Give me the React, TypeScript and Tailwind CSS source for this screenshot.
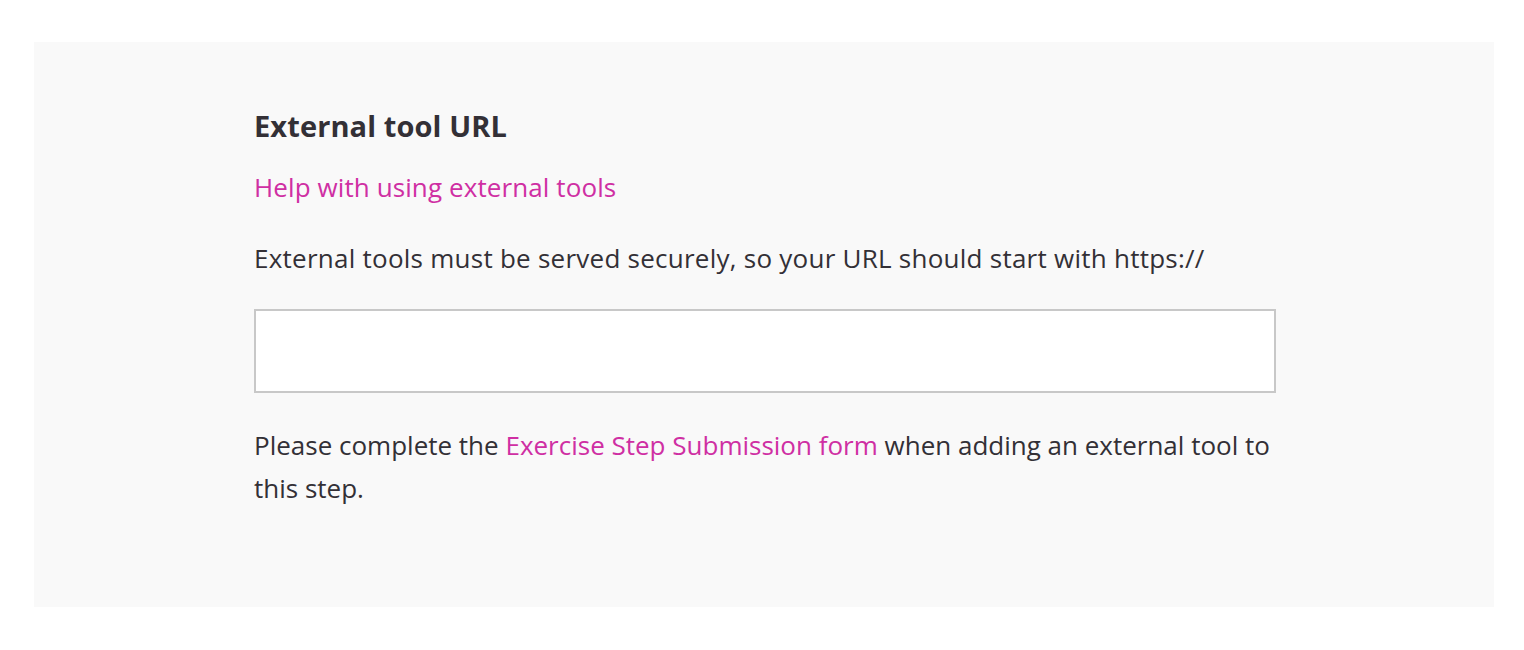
export default function App() {
    return (
        <div className="min-h-[650px] bg-white pt-[42px] pl-[34px]" style={{ fontFamily: "'Open Sans', Lato, sans-serif" }}>
            <section className="w-[1460px] h-[565px] bg-[#f9f9f9] pl-[220px] pt-[59px] text-[#333036]">
                <div className="w-[1022px] text-[26px] leading-[43px] tracking-[0.25px]">
                    <h2 className="text-[29px] leading-[50px] font-bold tracking-[0.1px]">External tool URL</h2>

                    <a href="#" className="mt-[15px] block text-[#cf2fa3] tracking-[0.1px]">
                        Help with using external tools
                    </a>

                    <p className="mt-[28px]">
                        External tools must be served securely, so your URL should start with https://
                    </p>

                    <input
                        type="text"
                        className="mt-[29px] block h-[84px] w-[1022px] border-2 border-[#c8c8c8] bg-white px-3 outline-none"
                    />

                    <p className="mt-[31px] tracking-normal">
                        Please complete the{" "}
                        <a href="#" className="text-[#cf2fa3]">
                            Exercise Step Submission form
                        </a>{" "}
                        when adding an external tool to this step.
                    </p>
                </div>
            </section>
        </div>
    );
}
